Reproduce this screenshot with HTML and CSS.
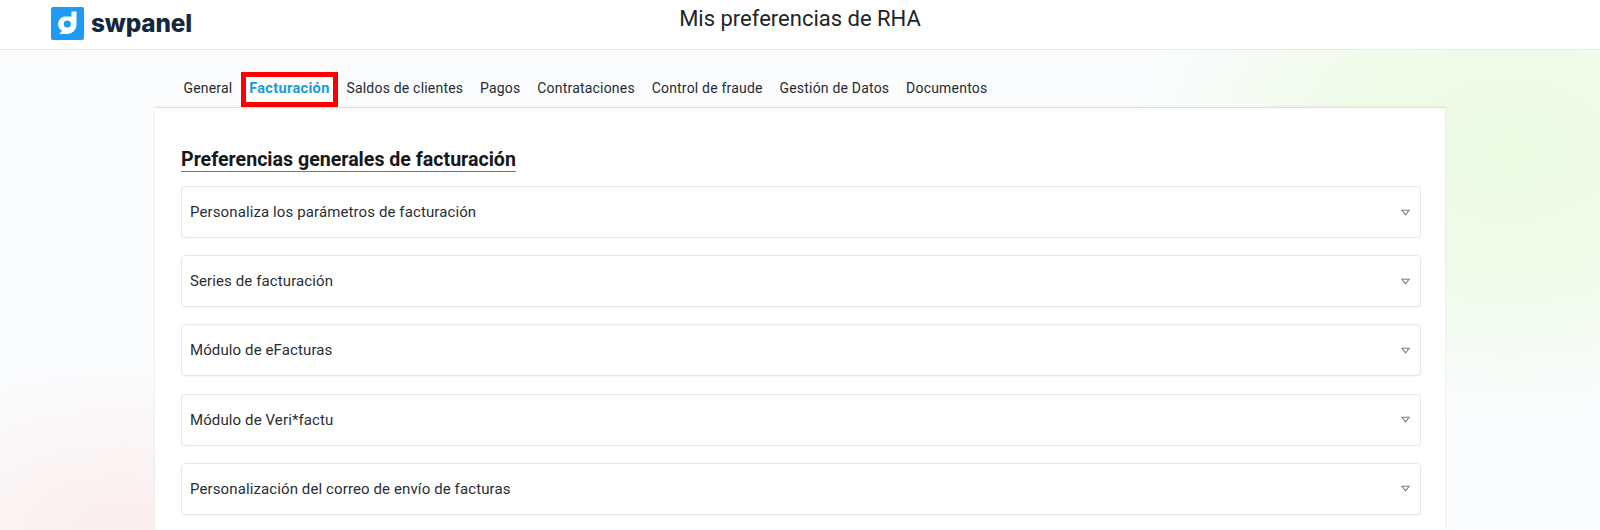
FILE: index.html
```html
<!DOCTYPE html>
<html lang="es">
<head>
<meta charset="utf-8">
<title>Mis preferencias de RHA</title>
<link rel="stylesheet" href="styles.css">
</head>
<body>
<header class="topbar">
  <div class="brand">
    <svg class="brand-icon" viewBox="0 0 33 33" aria-hidden="true">
      <rect width="33" height="33" rx="2" fill="#1e9bf5"/>
      <path d="M20.5 4.5h5V18a9 9 0 0 1-9 9H8.5l2.6-3.6-2.3-1.1A9.5 9.5 0 0 1 7 17a7.5 7.5 0 0 1 7.5-7.5h6z" fill="#fff"/>
      <circle cx="16.3" cy="17" r="3.6" fill="#1e9bf5"/>
    </svg>
    <span class="brand-name">swpanel</span>
  </div>
  <h1 class="page-title">Mis preferencias de RHA</h1>
</header>
<main class="content">
  <nav class="tabs">
    <a class="tab">General</a>
    <a class="tab tab-active">Facturación</a>
    <a class="tab">Saldos de clientes</a>
    <a class="tab">Pagos</a>
    <a class="tab">Contrataciones</a>
    <a class="tab">Control de fraude</a>
    <a class="tab">Gestión de Datos</a>
    <a class="tab">Documentos</a>
  </nav>
  <section class="card">
    <h2 class="section-title">Preferencias generales de facturación</h2>
    <div class="accordion">
      <div class="acc-item"><span>Personaliza los parámetros de facturación</span><svg class="caret" viewBox="0 0 10 7" aria-hidden="true"><path d="M1 1h8L5 6z"/></svg></div>
      <div class="acc-item"><span>Series de facturación</span><svg class="caret" viewBox="0 0 10 7" aria-hidden="true"><path d="M1 1h8L5 6z"/></svg></div>
      <div class="acc-item"><span>Módulo de eFacturas</span><svg class="caret" viewBox="0 0 10 7" aria-hidden="true"><path d="M1 1h8L5 6z"/></svg></div>
      <div class="acc-item"><span>Módulo de Veri*factu</span><svg class="caret" viewBox="0 0 10 7" aria-hidden="true"><path d="M1 1h8L5 6z"/></svg></div>
      <div class="acc-item"><span>Personalización del correo de envío de facturas</span><svg class="caret" viewBox="0 0 10 7" aria-hidden="true"><path d="M1 1h8L5 6z"/></svg></div>
    </div>
  </section>
</main>
</body>
</html>
```
FILE: styles.css
```css
* { box-sizing: border-box; }
html, body { margin: 0; height: 530px; overflow: hidden; }
body {
  font-family: Roboto, "Liberation Sans", sans-serif;
  color: #212529;
  background:
    radial-gradient(ellipse 380px 270px at 1510px 150px, #eefbe5 0%, #f0fbe9 45%, rgba(240,251,233,0) 100%),
    radial-gradient(ellipse 300px 170px at 120px 530px, #fbeeee 0%, rgba(251,238,238,0) 100%),
    #fafcfe;
}
.topbar {
  height: 50px;
  background: #fff;
  border-bottom: 1px solid #e6e8ec;
  display: flex;
  align-items: flex-start;
  padding-left: 51px;
  position: relative;
}
.brand { display: flex; align-items: center; gap: 7px; margin-top: 7px; height: 33px; }
.brand-icon { width: 33px; height: 33px; display: block; }
.brand-name {
  font-family: Inter, "Liberation Sans", sans-serif;
  font-weight: 800;
  font-size: 24.3px;
  letter-spacing: -.1px;
  color: #15283f;
  line-height: 33px;
}
.page-title {
  position: absolute;
  left: 0; right: 0; top: 6px;
  margin: 0;
  text-align: center;
  font-weight: 400;
  font-size: 22px;
  line-height: 26px;
  color: #212529;
}
.content { width: 1290px; margin-left: 155px; }
.tabs { display: flex; height: 57px; padding: 22px 0 0 20px; }
.tab {
  display: block;
  height: 35px;
  padding: 0 8.4px;
  font-size: 14px;
  line-height: 33px;
  color: #272b30;
  letter-spacing: .2px;
}
.tab-active {
  color: #1a9bdb;
  font-weight: 700;
  font-size: 14.5px;
  letter-spacing: .35px;
  background: #fff;
  outline: 5px solid #f00;
  outline-offset: -5px;
}
.card {
  background: #fff;
  border-top: 1px solid #d9dff0;
  height: 423px;
  padding: 41px 24px 0 26px;
  box-shadow: 0 0 3px rgba(0,0,0,.07);
}
.section-title {
  display: table;
  margin: 0 0 14px;
  font-size: 19.6px;
  font-weight: 700;
  line-height: 22px;
  color: #16181b;
  border-bottom: 1px solid #2b8fb5;
  padding-bottom: 0;
}
.accordion { display: flex; flex-direction: column; gap: 17.2px; }
.acc-item {
  height: 52px;
  flex: none;
  display: flex;
  align-items: center;
  justify-content: space-between;
  padding: 0 10px 0 8px;
  background: #fff;
  border: 1px solid #e4e7ea;
  border-radius: 4px;
  box-shadow: 0 1px 1px rgba(0,0,0,.03);
  font-size: 15px;
  letter-spacing: .11px;
  color: #2a2e33;
}
.caret { width: 9px; height: 7px; fill: none; stroke: #7a7f85; stroke-width: 1.3; }
```
